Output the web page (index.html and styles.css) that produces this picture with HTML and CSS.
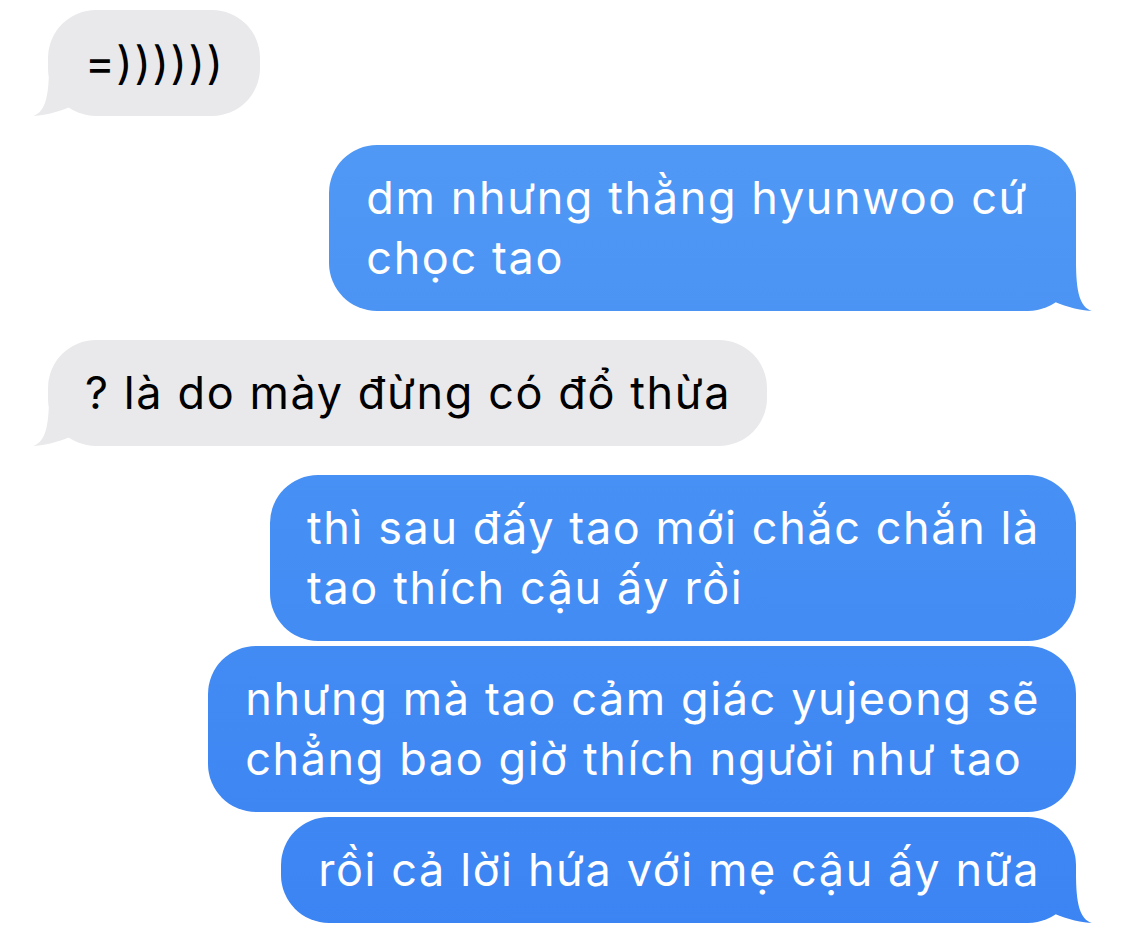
FILE: index.html
```html
<!DOCTYPE html>
<html lang="vi">
<head>
  <meta charset="UTF-8">
  <meta name="viewport" content="width=device-width, initial-scale=1.0">
  <title>Messages</title>
  <link rel="stylesheet" href="styles.css">
</head>
<body>
  <div class="thread">
    <div class="group them">
      <div class="bubble tail">=))))))</div>
    </div>

    <div class="group me">
      <div class="bubble tail wide">dm nhưng thằng hyunwoo cứ<br>chọc tao</div>
    </div>

    <div class="group them">
      <div class="bubble tail">? là do mày đừng có đổ thừa</div>
    </div>

    <div class="group me">
      <div class="bubble">thì sau đấy tao mới chắc chắn là<br>tao thích cậu ấy rồi</div>
      <div class="bubble">nhưng mà tao cảm giác yujeong sẽ<br>chẳng bao giờ thích người như tao</div>
      <div class="bubble tail">rồi cả lời hứa với mẹ cậu ấy nữa</div>
    </div>
  </div>
</body>
</html>
```

FILE: styles.css
```css
body {
  margin: 0;
  background: #FFFFFF;
  font-family: 'Inter', 'Noto Sans', sans-serif;
}

.thread {
  display: flex;
  flex-direction: column;
  gap: 29px;
  padding: 10px 49px 0 48px;
}

.group {
  display: flex;
  flex-direction: column;
  gap: 5px;
}

.group.them {
  align-items: flex-start;
}

.group.me {
  align-items: flex-end;
}

.bubble {
  position: relative;
  padding: 23px 36px 23px 37px;
  border-radius: 48px;
  font-size: 45px;
  line-height: 60px;
  letter-spacing: 1.6px;
  white-space: nowrap;
}

.bubble.wide {
  padding-right: 48px;
}

.them .bubble {
  background: #E9E9EB;
  color: #000000;
}

.me .bubble {
  background: linear-gradient(#539CF5, #3B84F3) fixed;
  color: #FFFFFF;
}

/* little curl under the last bubble of a group */
.bubble.tail::after {
  content: "";
  position: absolute;
  bottom: 0;
  width: 72px;
  height: 50px;
}

.them .bubble.tail::after {
  left: -15px;
  background: #E9E9EB;
  clip-path: path('M 16 0 C 16 32 12 46 0 50 C 8 50 26 46 37 41 L 37 0 Z');
}

.me .bubble.tail::after {
  right: -16px;
  background: linear-gradient(#539CF5, #3B84F3) fixed;
  clip-path: path('M 56 0 C 56 32 60 46 72 50 C 64 50 46 46 35 41 L 35 0 Z');
}
```
